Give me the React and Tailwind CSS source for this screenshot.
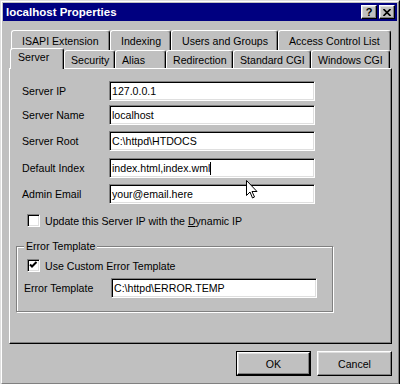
import React from 'react';

const raised =
  'border border-t-white border-l-white border-r-black border-b-black shadow-[inset_-1px_-1px_0_#808080,inset_1px_1px_0_#dfdfdf]';
const sunken =
  'border border-t-[#808080] border-l-[#808080] border-r-white border-b-white shadow-[inset_1px_1px_0_#000,inset_-1px_-1px_0_#dfdfdf]';
const tabEdge =
  'border-t border-l border-r border-t-white border-l-white border-r-black shadow-[inset_-1px_0_0_#808080] rounded-t-[3px]';

function TextBox({ value, caret, className }) {
  return (
    <div className={`h-[20px] bg-white ${sunken} pl-[2px] flex items-center leading-[12px] ${className}`}>
      <span>{value}</span>
      {caret && <span className="w-px h-[13px] bg-black" />}
    </div>
  );
}

function CheckBox({ checked }) {
  return (
    <div className={`w-[13px] h-[13px] bg-white ${sunken} flex-shrink-0`}>
      {checked && (
        <svg width="11" height="11" viewBox="0 0 11 11">
          <path d="M2 4.5 L4 6.5 L8.5 2" fill="none" stroke="#000" strokeWidth="2" />
        </svg>
      )}
    </div>
  );
}

function Field({ label, value, mt, caret }) {
  return (
    <div className={`flex items-center ${mt}`}>
      <div className="w-[99px] pl-[12px] leading-[12px]">{label}</div>
      <TextBox value={value} caret={caret} className="w-[206px]" />
    </div>
  );
}

const backTabs = [
  ['ISAPI Extension', 'w-[99px]'],
  ['Indexing', 'w-[61px]'],
  ['Users and Groups', 'w-[107px]'],
  ['Access Control List', 'w-[113px]'],
];

const frontTabs = [
  ['Security', 'w-[51px]'],
  ['Alias', 'w-[51px]'],
  ['Redirection', 'w-[67px]'],
  ['Standard CGI', 'w-[78px]'],
  ['Windows CGI', 'w-[79px]'],
];

export default function App() {
  return (
    <div className="w-[400px] h-[384px] overflow-hidden relative font-['Liberation_Sans',Arial,sans-serif] text-[10.6px] text-black">
      <div className="w-[400px] h-[385px] bg-[#c0c0c0] border border-t-[#dfdfdf] border-l-[#dfdfdf] border-r-black border-b-black">
        <div className="h-full border border-t-white border-l-white border-r-[#808080] border-b-[#808080] p-[1px]">
          {/* title bar */}
          <div className="h-[18px] bg-[#000080] flex items-center justify-between pl-[3px] pr-[2px]">
            <span className="text-white font-bold text-[11.5px] leading-[14px]">localhost Properties</span>
            <div className="flex gap-[2px]">
              <div className={`w-[16px] h-[14px] bg-[#c0c0c0] ${raised} flex items-center justify-center`}>
                <span className="font-bold text-[11px] leading-[11px] mt-[1px]">?</span>
              </div>
              <div className={`w-[16px] h-[14px] bg-[#c0c0c0] ${raised} flex items-center justify-center`}>
                <svg width="8" height="7" viewBox="0 0 8 7">
                  <path d="M0.5 0 L7.5 7 M7.5 0 L0.5 7" stroke="#000" strokeWidth="1.6" />
                </svg>
              </div>
            </div>
          </div>

          <div className="pl-[6px] pr-[5px]">
            {/* back tab row */}
            <div className="flex mt-[9px] ml-[2px] h-[20px]">
              {backTabs.map(([t, w]) => (
                <div key={t} className={`${w} h-[20px] ${tabEdge} pl-[10px] pt-[4px] leading-[12px] whitespace-nowrap`}>
                  {t}
                </div>
              ))}
            </div>
            {/* front tab row */}
            <div className="flex items-end ml-[1px] h-[18px]">
              <div className={`relative z-10 w-[54px] h-[21px] -mb-[1px] bg-[#c0c0c0] ${tabEdge} pl-[7px] pt-[2px] leading-[12px]`}>
                Server
              </div>
              {frontTabs.map(([t, w]) => (
                <div key={t} className={`${w} h-[18px] ${tabEdge} pl-[6px] pt-[3px] leading-[12px] whitespace-nowrap`}>
                  {t}
                </div>
              ))}
            </div>

            {/* panel */}
            <div className="h-[276px] border border-t-white border-l-white border-r-black border-b-black shadow-[inset_-1px_-1px_0_#808080]">
              <Field label="Server IP" value="127.0.0.1" mt="mt-[12px]" />
              <Field label="Server Name" value="localhost" mt="mt-[4px]" />
              <Field label="Server Root" value="C:\httpd\HTDOCS" mt="mt-[6px]" />
              <Field label="Default Index" value="index.html,index.wml" mt="mt-[7px]" caret />
              <Field label="Admin Email" value="your@email.here" mt="mt-[6px]" />

              <div className="flex items-center mt-[10px] pl-[17px]">
                <CheckBox />
                <span className="ml-[5px] leading-[12px]">
                  Update this Server IP with the <span className="underline">D</span>ynamic IP
                </span>
              </div>

              <div className="relative ml-[6px] mt-[19px] w-[317px] h-[66px] border border-[#808080] shadow-[inset_1px_1px_0_#fff,1px_1px_0_#fff]">
                <span className="absolute left-[7px] -top-[7px] px-[2px] bg-[#c0c0c0] leading-[12px]">Error Template</span>
                <div className="flex items-center mt-[12px] pl-[10px]">
                  <CheckBox checked />
                  <span className="ml-[5px] leading-[12px]">Use Custom Error Template</span>
                </div>
                <div className="flex items-center mt-[6px]">
                  <div className="w-[94px] pl-[7px] leading-[12px]">Error Template</div>
                  <TextBox value="C:\httpd\ERROR.TEMP" className="w-[206px]" />
                </div>
              </div>
            </div>

            {/* buttons */}
            <div className="flex justify-end gap-[6px] mt-[7px]">
              <div className="w-[75px] h-[25px] border border-black">
                <div className={`h-full bg-[#c0c0c0] ${raised} flex items-center justify-center leading-[12px]`}>OK</div>
              </div>
              <div className={`w-[75px] h-[25px] bg-[#c0c0c0] ${raised} flex items-center justify-center leading-[12px]`}>
                Cancel
              </div>
            </div>
          </div>
        </div>
      </div>

      {/* mouse pointer */}
      <svg className="absolute left-[246px] top-[180px]" width="13" height="20" viewBox="0 0 13 20">
        <path
          d="M0.5 0.5 L0.5 15.5 L4 12 L6.5 18 L8.5 17 L6 11.5 L11 11.5 Z"
          fill="#fff"
          stroke="#000"
          strokeWidth="1"
        />
      </svg>
    </div>
  );
}
